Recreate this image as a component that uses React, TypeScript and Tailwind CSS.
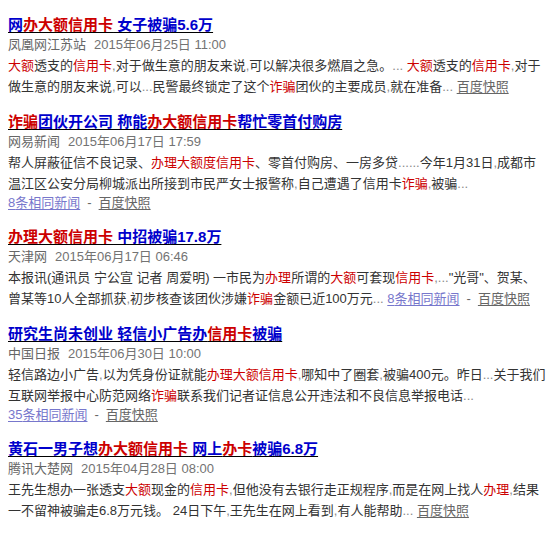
import React from 'react';

type Seg = { t: string; c?: 'r' | 'b' };

interface NewsItem {
  title: Seg[];
  source: string;
  time: string;
  lines: React.ReactNode[];
  links?: React.ReactNode;
}

const FONT = { fontFamily: '"Liberation Sans", Arial, "Noto Sans CJK SC", sans-serif' };

// red keyword in body
const R = ({ children }: { children: React.ReactNode }) => <span className="text-[#c00]">{children}</span>;
// light grey punctuation
const G = ({ children }: { children: React.ReactNode }) => <span className="text-[#8a8a8a]">{children}</span>;

const Snapshot = () => (
  <a href="#" className="text-[#666] underline underline-offset-2">
    百度快照
  </a>
);

const Related = ({ n }: { n: number }) => (
  <a href="#" className="text-[#7777cc] underline underline-offset-2">
    {n}条相同新闻
  </a>
);

const Dash = () => <span className="text-[#666] mx-[7px]">-</span>;

const items: NewsItem[] = [
  {
    title: [{ t: '网', c: 'b' }, { t: '办大额信用卡', c: 'r' }, { t: ' 女子被骗5.6万', c: 'b' }],
    source: '凤凰网江苏站',
    time: '2015年06月25日 11:00',
    lines: [
      <>
        <R>大额</R>透支的<R>信用卡</R><G>,</G>对于做生意的朋友来说<G>,</G>可以解决很多燃眉之急。<G>...</G> <R>大额</R>透支的<R>信用卡</R><G>,</G>对于
      </>,
      <>
        做生意的朋友来说<G>,</G>可以<G>...</G>民警最终锁定了这个<R>诈骗</R>团伙的主要成员<G>,</G>就在准备<G>...</G> <Snapshot />
      </>,
    ],
  },
  {
    title: [{ t: '诈骗', c: 'r' }, { t: '团伙开公司 称能', c: 'b' }, { t: '办大额信用卡', c: 'r' }, { t: '帮忙零首付购房', c: 'b' }],
    source: '网易新闻',
    time: '2015年06月17日 17:59',
    lines: [
      <>
        帮人屏蔽征信不良记录、<R>办理大额度信用卡</R>、零首付购房、一房多贷<G>......</G>今年1月31日<G>,</G>成都市
      </>,
      <>
        温江区公安分局柳城派出所接到市民严女士报警称<G>,</G>自己遭遇了信用卡<R>诈骗</R><G>,</G>被骗<G>...</G>
      </>,
    ],
    links: (
      <>
        <Related n={8} />
        <Dash />
        <Snapshot />
      </>
    ),
  },
  {
    title: [{ t: '办理大额信用卡', c: 'r' }, { t: ' 中招被骗17.8万', c: 'b' }],
    source: '天津网',
    time: '2015年06月17日 06:46',
    lines: [
      <>
        本报讯(通讯员 宁公宣 记者 周爱明) 一市民为<R>办理</R>所谓的<R>大额</R>可套现<R>信用卡</R><G>,...</G>"光哥"、贺某、
      </>,
      <>
        曾某等10人全部抓获<G>,</G>初步核查该团伙涉嫌<R>诈骗</R>金额已近100万元<G>...</G> <Related n={8} />
        <Dash />
        <Snapshot />
      </>,
    ],
  },
  {
    title: [{ t: '研究生尚未创业 轻信小广告办', c: 'b' }, { t: '信用卡', c: 'r' }, { t: '被骗', c: 'b' }],
    source: '中国日报',
    time: '2015年06月30日 10:00',
    lines: [
      <>
        轻信路边小广告<G>,</G>以为凭身份证就能<R>办理大额信用卡</R><G>,</G>哪知中了圈套<G>,</G>被骗400元。昨日<G>...</G>关于我们
      </>,
      <>
        互联网举报中心防范网络<R>诈骗</R>联系我们记者证信息公开违法和不良信息举报电话<G>...</G>
      </>,
    ],
    links: (
      <>
        <Related n={35} />
        <Dash />
        <Snapshot />
      </>
    ),
  },
  {
    title: [
      { t: '黄石一男子想', c: 'b' },
      { t: '办大额信用卡', c: 'r' },
      { t: ' 网上', c: 'b' },
      { t: '办卡', c: 'r' },
      { t: '被骗6.8万', c: 'b' },
    ],
    source: '腾讯大楚网',
    time: '2015年04月28日 08:00',
    lines: [
      <>
        王先生想办一张透支<R>大额</R>现金的<R>信用卡</R><G>,</G>但他没有去银行走正规程序<G>,</G>而是在网上找人<R>办理</R><G>,</G>结果
      </>,
      <>
        一不留神被骗走6.8万元钱。 24日下午<G>,</G>王先生在网上看到<G>,</G>有人能帮助<G>...</G> <Snapshot />
      </>,
    ],
  },
];

function Result({ item }: { item: NewsItem }) {
  return (
    <div className="mb-[14px]">
      <h3 className="text-[15px] font-bold leading-[21px] whitespace-nowrap">
        <a href="#" className="underline underline-offset-2">
          {item.title.map((s, i) => (
            <span key={i} className={s.c === 'r' ? 'text-[#c00]' : 'text-[#0000cc]'}>
              {s.t}
            </span>
          ))}
        </a>
      </h3>
      <div className="text-[13px] leading-[20px] text-[#666] whitespace-nowrap">
        {item.source}
        <span className="ml-[8px] text-[#737373]">{item.time}</span>
      </div>
      <div className="text-[13px] leading-[21px] text-[#333]">
        {item.lines.map((l, i) => (
          <div key={i} className="whitespace-nowrap">
            {l}
          </div>
        ))}
        {item.links && <div className="whitespace-nowrap leading-[18px]">{item.links}</div>}
      </div>
    </div>
  );
}

export default function App() {
  return (
    <div className="w-[551px] h-[536px] overflow-hidden bg-white pl-[8px] pt-[14px]" style={FONT}>
      {items.map((it, i) => (
        <Result key={i} item={it} />
      ))}
    </div>
  );
}
